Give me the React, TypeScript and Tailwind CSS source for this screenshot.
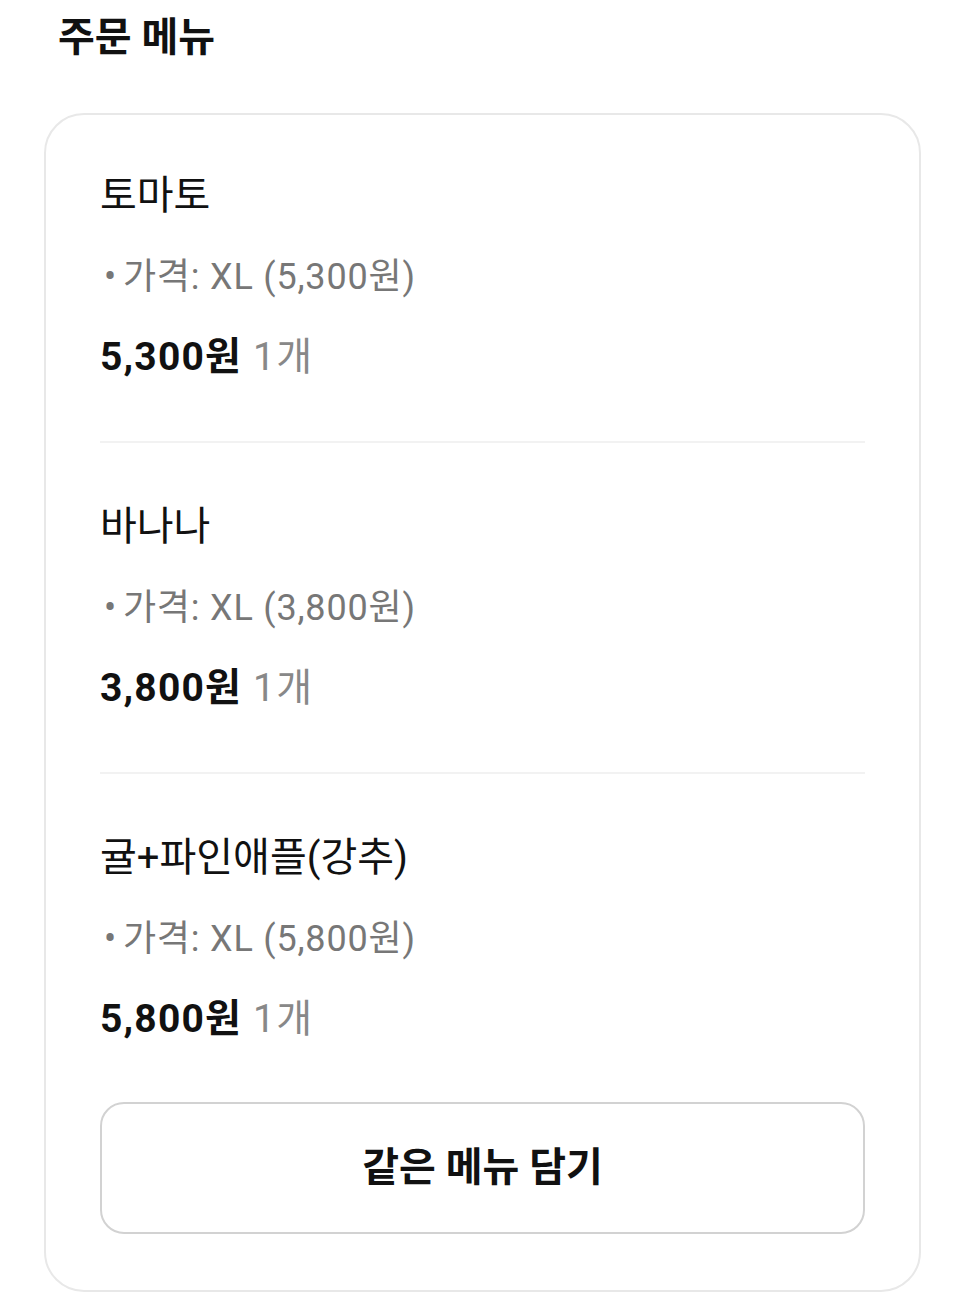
const items = [
  { name: '토마토', option: 'XL (5,300원)', price: '5,300원', qty: '1개' },
  { name: '바나나', option: 'XL (3,800원)', price: '3,800원', qty: '1개' },
  { name: '귤+파인애플(강추)', option: 'XL (5,800원)', price: '5,800원', qty: '1개' },
]

export default function App() {
  return (
    <div
      className="min-h-[1294px] bg-white text-[#111]"
      style={{ fontFamily: 'Roboto, "Noto Sans CJK KR", sans-serif' }}
    >
      <h2 className="pl-[58px] pt-[14px] text-[40px] font-bold leading-[48px]">주문 메뉴</h2>

      <div className="ml-[44px] mt-[51px] w-[877px] rounded-[40px] border-2 border-[#e8e8e8] px-[54px] pt-[57px] pb-[56px]">
        {items.map((item, i) => (
          <div key={item.name}>
            {i > 0 && <div className="my-[60px] h-[2px] bg-[#f2f2f2]" />}
            <div className="text-[40px] leading-[48px]">{item.name}</div>
            <div className="mt-[33px] pl-[4px] text-[36px] leading-[48px] tracking-[0.8px] text-[#777]">
              <span className="mr-[6px]">•</span>가격: {item.option}
            </div>
            <div className="mt-[32px] text-[39px] leading-[48px] tracking-[1.2px]">
              <span className="font-bold">{item.price}</span>{' '}
              <span className="text-[#888]">{item.qty}</span>
            </div>
          </div>
        ))}

        <button className="mt-[59px] flex h-[132px] w-full items-center justify-center rounded-[24px] border-2 border-[#d2d2d2] bg-white text-[40px] font-bold">
          같은 메뉴 담기
        </button>
      </div>
    </div>
  )
}
